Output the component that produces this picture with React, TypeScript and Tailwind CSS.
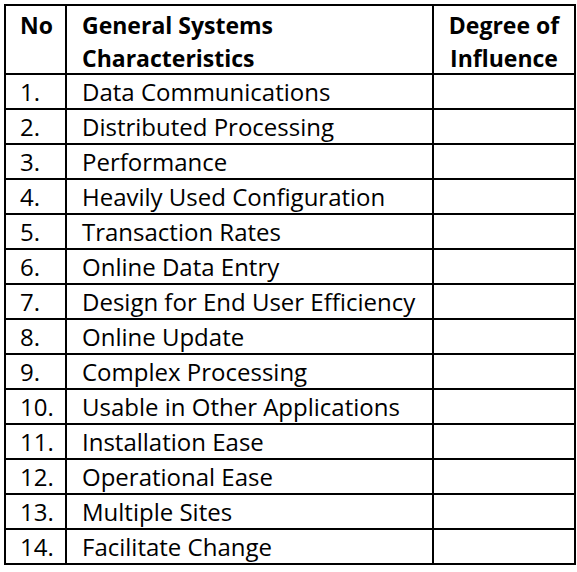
const rows = [
  'Data Communications',
  'Distributed Processing',
  'Performance',
  'Heavily Used Configuration',
  'Transaction Rates',
  'Online Data Entry',
  'Design for End User Efficiency',
  'Online Update',
  'Complex Processing',
  'Usable in Other Applications',
  'Installation Ease',
  'Operational Ease',
  'Multiple Sites',
  'Facilitate Change',
];

const cell = 'border-r-2 border-b-2 border-black';

function App() {
  return (
    <div className="min-h-screen bg-white p-1 font-['Open_Sans',sans-serif] text-[24px] text-black">
      <div className="grid w-[572px] grid-cols-[61px_367px_142px] border-l-2 border-t-2 border-black">
        {/* Header */}
        <div className={`${cell} h-[69px] pl-[14px] pt-[3px] text-[23px] font-bold leading-[33px]`}>No</div>
        <div className={`${cell} h-[69px] pl-[15px] pt-[3px] text-[23px] font-bold leading-[33px]`}>
          General Systems
          <br />
          Characteristics
        </div>
        <div className={`${cell} h-[69px] pt-[3px] text-center text-[23px] font-bold leading-[33px]`}>
          Degree of
          <br />
          Influence
        </div>

        {/* Rows */}
        {rows.map((name, i) => (
          <div key={name} className="contents">
            <div className={`${cell} flex h-[35px] items-center pl-[14px] pt-[1px]`}>{i + 1}.</div>
            <div className={`${cell} flex h-[35px] items-center pl-[15px] pt-[1px]`}>{name}</div>
            <div className={`${cell} h-[35px]`} />
          </div>
        ))}
      </div>
    </div>
  );
}

export default App;
